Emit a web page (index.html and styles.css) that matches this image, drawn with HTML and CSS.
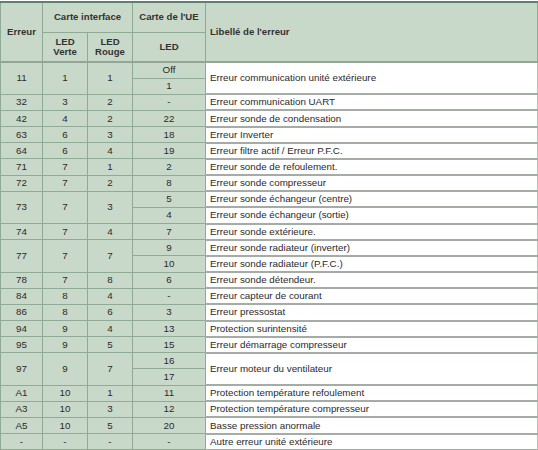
FILE: index.html
```html
<!DOCTYPE html>
<html lang="fr">
<head>
<meta charset="utf-8">
<title>Codes erreur</title>
<link rel="stylesheet" href="styles.css">
</head>
<body>
<div class="wrap">
<table class="codes">
<colgroup><col class="c1"><col class="c2"><col class="c3"><col class="c4"><col class="c5"></colgroup>
<thead>
<tr class="h1"><th rowspan="2">Erreur</th><th colspan="2">Carte interface</th><th>Carte de l'UE</th><th rowspan="2" class="lib">Libellé de l'erreur</th></tr>
<tr class="h2"><th>LED<br>Verte</th><th>LED<br>Rouge</th><th>LED</th></tr>
</thead>
<tbody>
<tr><td rowspan="2">11</td><td rowspan="2">1</td><td rowspan="2">1</td><td>Off</td><td rowspan="2" class="lib">Erreur communication unité extérieure</td></tr>
<tr><td>1</td></tr>
<tr><td>32</td><td>3</td><td>2</td><td>-</td><td class="lib">Erreur communication UART</td></tr>
<tr><td>42</td><td>4</td><td>2</td><td>22</td><td class="lib">Erreur sonde de condensation</td></tr>
<tr><td>63</td><td>6</td><td>3</td><td>18</td><td class="lib">Erreur Inverter</td></tr>
<tr><td>64</td><td>6</td><td>4</td><td>19</td><td class="lib">Erreur filtre actif / Erreur P.F.C.</td></tr>
<tr><td>71</td><td>7</td><td>1</td><td>2</td><td class="lib">Erreur sonde de refoulement.</td></tr>
<tr><td>72</td><td>7</td><td>2</td><td>8</td><td class="lib">Erreur sonde compresseur</td></tr>
<tr><td rowspan="2">73</td><td rowspan="2">7</td><td rowspan="2">3</td><td>5</td><td class="lib">Erreur sonde échangeur (centre)</td></tr>
<tr><td>4</td><td class="lib">Erreur sonde échangeur (sortie)</td></tr>
<tr><td>74</td><td>7</td><td>4</td><td>7</td><td class="lib">Erreur sonde extérieure.</td></tr>
<tr><td rowspan="2">77</td><td rowspan="2">7</td><td rowspan="2">7</td><td>9</td><td class="lib">Erreur sonde radiateur (inverter)</td></tr>
<tr><td>10</td><td class="lib">Erreur sonde radiateur (P.F.C.)</td></tr>
<tr><td>78</td><td>7</td><td>8</td><td>6</td><td class="lib">Erreur sonde détendeur.</td></tr>
<tr><td>84</td><td>8</td><td>4</td><td>-</td><td class="lib">Erreur capteur de courant</td></tr>
<tr><td>86</td><td>8</td><td>6</td><td>3</td><td class="lib">Erreur pressostat</td></tr>
<tr><td>94</td><td>9</td><td>4</td><td>13</td><td class="lib">Protection surintensité</td></tr>
<tr><td>95</td><td>9</td><td>5</td><td>15</td><td class="lib">Erreur démarrage compresseur</td></tr>
<tr><td rowspan="2">97</td><td rowspan="2">9</td><td rowspan="2">7</td><td>16</td><td rowspan="2" class="lib">Erreur moteur du ventilateur</td></tr>
<tr><td>17</td></tr>
<tr><td>A1</td><td>10</td><td>1</td><td>11</td><td class="lib">Protection température refoulement</td></tr>
<tr><td>A3</td><td>10</td><td>3</td><td>12</td><td class="lib">Protection température compresseur</td></tr>
<tr><td>A5</td><td>10</td><td>5</td><td>20</td><td class="lib">Basse pression anormale</td></tr>
<tr><td>-</td><td>-</td><td>-</td><td>-</td><td class="lib">Autre erreur unité extérieure</td></tr>
</tbody>
</table>
</div>
</body>
</html>
```

FILE: styles.css
```css
html, body {
  margin: 0;
  padding: 0;
  background: #ffffff;
}
.wrap {
  padding-top: 1px;
}
.codes {
  width: 537px;
  border-collapse: collapse;
  table-layout: fixed;
  font-family: "Liberation Sans", Arial, sans-serif;
  font-size: 9.8px;
  color: #2a2a2a;
  background: #c9d9c9;
  border-top: 2px solid #5f7f6f;
}
.c1 { width: 42px; }
.c2 { width: 45px; }
.c3 { width: 45px; }
.c4 { width: 73px; }
.c5 { width: 332px; }
.codes th, .codes td {
  border: 1px solid #8fab95;
  padding: 0;
  text-align: center;
  vertical-align: middle;
  line-height: 10px;
}
.codes th {
  font-weight: bold;
  font-size: 9.6px;
  color: #333333;
}
.codes .h1 { height: 30px; }
.codes .h2 { height: 30px; }
.codes thead th {
  border-bottom: 2px solid #93a596;
}
.codes .h1 th[colspan], .codes .h1 th:nth-child(3) {
  border-bottom: 1px solid #8fab95;
}
.codes th.lib {
  text-align: left;
  padding-left: 4px;
  border-bottom: 2px solid #93a596;
}
.codes tbody tr {
  height: 16.17px;
}
.codes td.lib {
  background: #ffffff;
  text-align: left;
  padding-left: 4px;
  border-top: 2px solid #a5aca5;
  border-bottom: 2px solid #a5aca5;
  border-right: 1px solid #b8c2b8;
}
```
